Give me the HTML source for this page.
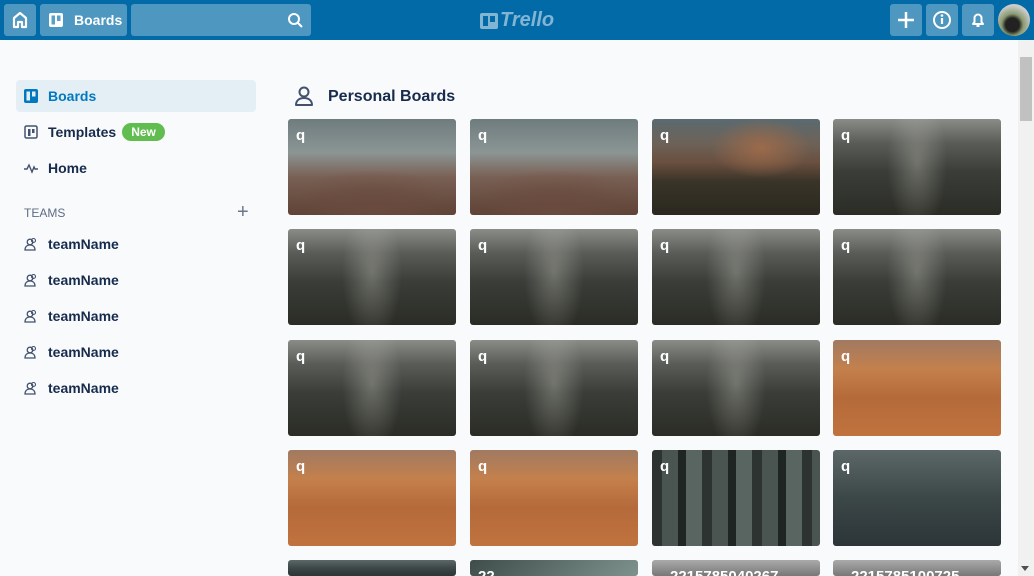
<!DOCTYPE html>
<html style="width:1034px;height:576px;overflow:hidden"><head><meta charset="utf-8"><style>
*{margin:0;padding:0;box-sizing:border-box}
body{width:1034px;height:576px;overflow:hidden;background:#f9fafc;font-family:"Liberation Sans",sans-serif;position:relative}
.hdr{position:absolute;left:0;top:0;width:1034px;height:40px;background:#026aa7}
.btn{position:absolute;top:4px;height:32px;background:rgba(255,255,255,.3);border-radius:3px;color:#fff}
.side a{position:absolute;left:16px;width:240px;height:32px;display:flex;align-items:center;padding-left:8px;font-weight:bold;font-size:14px;color:#172b4d}
.side svg{margin-right:10px}
.tile{position:absolute;width:168px;height:96px;border-radius:3px;overflow:hidden}
.tile b{position:absolute;left:8px;top:8px;color:#fff;font-size:15px}
.plant{background:radial-gradient(ellipse 90px 40px at 50% 95%,#6a4a3e,transparent),linear-gradient(180deg,#6f7c7e 0%,#8b9594 35%,#7a6155 60%,#5e4236 100%)}
.mesa{background:radial-gradient(ellipse 50px 30px at 65% 30%,#9b6a4a,transparent),linear-gradient(180deg,#5a6a70 0%,#6d6258 25%,#6a5040 45%,#3a3428 65%,#2a281f 100%)}
.valley{background:radial-gradient(ellipse 30px 70px at 50% 45%,rgba(200,200,190,.35),transparent),linear-gradient(180deg,#8a8c88 0%,#5a5c58 25%,#3a3d38 55%,#2b2c26 100%)}
.desert{background:linear-gradient(180deg,#a07a62 0%,#c4804c 30%,#b56a3a 60%,#c0733e 100%)}
.forest{background:repeating-linear-gradient(90deg,#2d3330 0 10px,#4a5450 10px 26px,#1f2522 26px 34px,#586560 34px 50px)}
.water{background:linear-gradient(180deg,#5c6768 0%,#3c4748 50%,#2c3537 100%)}
.grey{background:linear-gradient(180deg,#aaa 0%,#777 100%)}
.teal{background:linear-gradient(135deg,#3e4d4a 0%,#7e928d 100%)}
</style></head><body>
<div class="hdr">
 <div class="btn" style="left:4px;width:32px"><svg width="32" height="32" viewBox="0 0 32 32"><path d="M10 23V14l6-5 6 5v9h-4v-5h-4v5z" fill="none" stroke="#fff" stroke-width="2.2" stroke-linejoin="round"/></svg></div>
 <div class="btn" style="left:40px;width:87px"><svg style="position:absolute;left:8px;top:8px" width="16" height="16" viewBox="0 0 16 16"><rect x="1" y="1" width="14" height="14" rx="2" fill="#fff"/><rect x="3.5" y="3.5" width="3.5" height="9" fill="#5aa0cb"/><rect x="9" y="3.5" width="3.5" height="5.5" fill="#5aa0cb"/></svg><span style="position:absolute;left:34px;top:8px;font-weight:bold;font-size:14px">Boards</span></div>
 <div class="btn" style="left:131px;width:180px"><svg style="position:absolute;right:8px;top:8px" width="16" height="16" viewBox="0 0 16 16"><circle cx="7" cy="7" r="5" fill="none" stroke="#fff" stroke-width="2"/><path d="M11 11l4 4" stroke="#fff" stroke-width="2"/></svg></div>
 <div style="position:absolute;left:480px;top:9px;display:flex;align-items:center;color:rgba(255,255,255,.5)"><svg width="18" height="18" viewBox="0 0 18 18"><rect x="0" y="1" width="18" height="16" rx="2" fill="rgba(255,255,255,.5)"/><rect x="3" y="4" width="5" height="10" fill="#026aa7"/><rect x="10" y="4" width="5" height="6" fill="#026aa7"/></svg><span style="font-style:italic;font-weight:bold;font-size:20px;margin-left:2px">Trello</span></div>
 <div class="btn" style="left:890px;width:32px"><svg width="32" height="32"><path d="M16 8v16M8 16h16" stroke="#fff" stroke-width="2.5"/></svg></div>
 <div class="btn" style="left:926px;width:32px"><svg width="32" height="32"><circle cx="16" cy="16" r="8" fill="none" stroke="#fff" stroke-width="2"/><path d="M16 14v6" stroke="#fff" stroke-width="2.2"/><circle cx="16" cy="11.5" r="1.3" fill="#fff"/></svg></div>
 <div class="btn" style="left:962px;width:32px"><svg width="32" height="32"><path d="M11 20h10l-1.5-2v-4a3.5 3.5 0 0 0-7 0v4z" fill="none" stroke="#fff" stroke-width="2" stroke-linejoin="round"/><path d="M14.5 22h3" stroke="#fff" stroke-width="2"/></svg></div>
 <div style="position:absolute;left:998px;top:4px;width:32px;height:32px;border-radius:50%;background:radial-gradient(circle at 45% 65%,#222 0 25%,#8a9a70 40%,#ccc 70%)"></div>
</div>
<div class="side">
 <a style="top:80px;background:#e4eef5;border-radius:4px;color:#0079bf"><svg width="14" height="14" viewBox="0 0 14 14"><rect width="14" height="14" rx="2" fill="#0079bf"/><rect x="2.5" y="2.5" width="3.5" height="9" fill="#e4eef5"/><rect x="8" y="2.5" width="3.5" height="5" fill="#e4eef5"/></svg>Boards</a>
 <a style="top:116px"><svg width="14" height="14" viewBox="0 0 14 14"><rect x="1" y="1" width="12" height="12" rx="1.5" fill="none" stroke="#42526e" stroke-width="1.5"/><rect x="4" y="4" width="2.5" height="7" fill="#42526e"/><rect x="8" y="4" width="2.5" height="4" fill="#42526e"/></svg>Templates<span style="margin-left:6px;background:#61bd4f;color:#fff;border-radius:10px;padding:2px 9px;font-size:12px">New</span></a>
 <a style="top:152px"><svg width="14" height="14" viewBox="0 0 14 14"><path d="M0 8h3l2-4 3 7 2-5 1 2h3" fill="none" stroke="#42526e" stroke-width="1.4"/></svg>Home</a>
 <div style="position:absolute;left:24px;top:206px;font-size:12px;color:#5e6c84">TEAMS</div>
 <div style="position:absolute;left:237px;top:202px;font-size:20px;color:#6b778c;line-height:20px">+</div>
 <a style="top:228px"><svg width="14" height="14" viewBox="0 0 14 14"><circle cx="6" cy="5" r="2.8" fill="none" stroke="#42526e" stroke-width="1.3"/><path d="M1 13c0-4 3-5 5-5s5 1 5 5z" fill="none" stroke="#42526e" stroke-width="1.3"/><circle cx="9.5" cy="3.5" r="2" fill="none" stroke="#42526e" stroke-width="1.1"/></svg>teamName</a>
 <a style="top:264px"><svg width="14" height="14" viewBox="0 0 14 14"><circle cx="6" cy="5" r="2.8" fill="none" stroke="#42526e" stroke-width="1.3"/><path d="M1 13c0-4 3-5 5-5s5 1 5 5z" fill="none" stroke="#42526e" stroke-width="1.3"/><circle cx="9.5" cy="3.5" r="2" fill="none" stroke="#42526e" stroke-width="1.1"/></svg>teamName</a>
 <a style="top:300px"><svg width="14" height="14" viewBox="0 0 14 14"><circle cx="6" cy="5" r="2.8" fill="none" stroke="#42526e" stroke-width="1.3"/><path d="M1 13c0-4 3-5 5-5s5 1 5 5z" fill="none" stroke="#42526e" stroke-width="1.3"/><circle cx="9.5" cy="3.5" r="2" fill="none" stroke="#42526e" stroke-width="1.1"/></svg>teamName</a>
 <a style="top:336px"><svg width="14" height="14" viewBox="0 0 14 14"><circle cx="6" cy="5" r="2.8" fill="none" stroke="#42526e" stroke-width="1.3"/><path d="M1 13c0-4 3-5 5-5s5 1 5 5z" fill="none" stroke="#42526e" stroke-width="1.3"/><circle cx="9.5" cy="3.5" r="2" fill="none" stroke="#42526e" stroke-width="1.1"/></svg>teamName</a>
 <a style="top:372px"><svg width="14" height="14" viewBox="0 0 14 14"><circle cx="6" cy="5" r="2.8" fill="none" stroke="#42526e" stroke-width="1.3"/><path d="M1 13c0-4 3-5 5-5s5 1 5 5z" fill="none" stroke="#42526e" stroke-width="1.3"/><circle cx="9.5" cy="3.5" r="2" fill="none" stroke="#42526e" stroke-width="1.1"/></svg>teamName</a>
</div>
<svg style="position:absolute;left:294px;top:86px" width="20" height="20" viewBox="0 0 20 20"><circle cx="10" cy="6" r="4.5" fill="none" stroke="#42526e" stroke-width="2"/><path d="M2 19c0-5 4-7 8-7s8 2 8 7z" fill="none" stroke="#42526e" stroke-width="2" stroke-linejoin="round"/></svg>
<div style="position:absolute;left:328px;top:88px;font-weight:bold;font-size:16px;color:#172b4d">Personal Boards</div>

<div class="tile plant" style="left:288px;top:119px"><b>q</b></div>
<div class="tile plant" style="left:470px;top:119px"><b>q</b></div>
<div class="tile mesa" style="left:652px;top:119px"><b>q</b></div>
<div class="tile valley" style="left:833px;top:119px"><b>q</b></div>
<div class="tile valley" style="left:288px;top:229px"><b>q</b></div>
<div class="tile valley" style="left:470px;top:229px"><b>q</b></div>
<div class="tile valley" style="left:652px;top:229px"><b>q</b></div>
<div class="tile valley" style="left:833px;top:229px"><b>q</b></div>
<div class="tile valley" style="left:288px;top:340px"><b>q</b></div>
<div class="tile valley" style="left:470px;top:340px"><b>q</b></div>
<div class="tile valley" style="left:652px;top:340px"><b>q</b></div>
<div class="tile desert" style="left:833px;top:340px"><b>q</b></div>
<div class="tile desert" style="left:288px;top:450px"><b>q</b></div>
<div class="tile desert" style="left:470px;top:450px"><b>q</b></div>
<div class="tile forest" style="left:652px;top:450px"><b>q</b></div>
<div class="tile water" style="left:833px;top:450px"><b>q</b></div>
<div class="tile water" style="left:288px;top:560px;height:16px"></div>
<div class="tile teal" style="left:470px;top:560px;height:16px"><b>22</b></div>
<div class="tile grey" style="left:652px;top:560px;height:16px"><b style="left:18px">2215785040267</b></div>
<div class="tile grey" style="left:833px;top:560px;height:16px"><b style="left:18px">2215785100725</b></div>

<div style="position:absolute;left:1018px;top:40px;width:16px;height:536px;background:#f1f1f1"></div>
<div style="position:absolute;left:1020px;top:57px;width:12px;height:64px;background:#c1c1c1"></div>
<div style="position:absolute;left:1021px;top:566px;width:0;height:0;border-left:4px solid transparent;border-right:4px solid transparent;border-top:5px solid #505050"></div>
</body></html>
